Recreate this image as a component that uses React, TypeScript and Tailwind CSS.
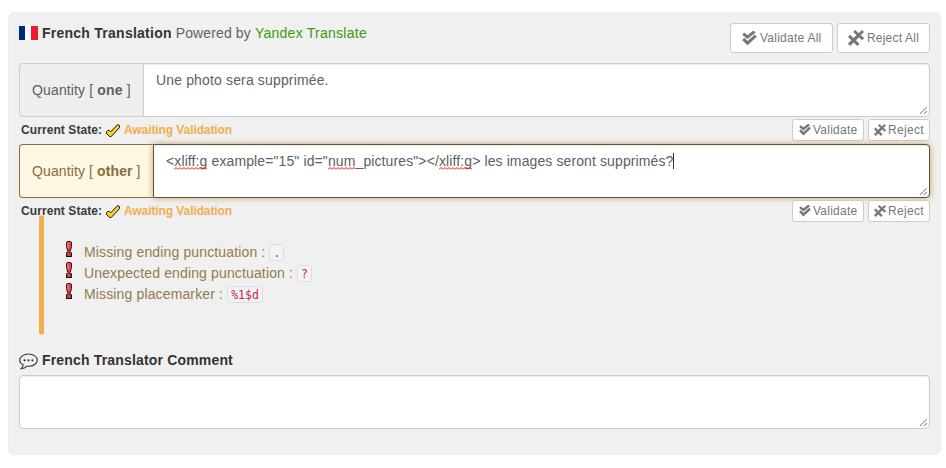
import type { ReactNode } from "react";

function DoubleCheck({ size }: { size: number }) {
  return (
    <svg width={size} height={size} viewBox="0 0 15 15" fill="none" stroke="#777" className="shrink-0">
      <path d="M1.3 2.6 5.4 6.1 12.6 .6" strokeWidth="3" />
      <path d="M1.2 7.8 5.5 12.1 13.8 4.6" strokeWidth="3.1" />
    </svg>
  );
}

function DoubleCross({ size }: { size: number }) {
  return (
    <svg width={size} height={size} viewBox="0 0 16 16" fill="none" stroke="#777" className="shrink-0">
      <path d="M1 5.8 10.4 14.8M10 5.8 1 14.8" strokeWidth="3.1" />
      <path d="M6.2 1 15.2 9.2M15 1 8.2 7.6" strokeWidth="2.8" />
    </svg>
  );
}

function PixelCheck() {
  return (
    <svg width="14" height="14" viewBox="0 0 14 14" className="absolute left-0 top-0">
      <path d="M11.4 .8H12.8L13.5 1.6V3.6L5.2 12.5H3.6L.6 9.5V7.6L1.8 6.4H3.3L4.7 7.8Z" fill="#ffd028" stroke="#111" strokeWidth="1" />
    </svg>
  );
}

function Exclamation() {
  return (
    <svg width="6" height="16" viewBox="0 0 6 16" className="relative -top-1 shrink-0">
      <path d="M.5 1.2 1.2.5H4.8L5.5 1.2V5.5L4.3 10.3H1.7L.5 5.5Z" fill="#e2444a" stroke="#2a0508" strokeWidth=".9" />
      <path d="M2 1.5V7" stroke="#f39a9a" strokeWidth=".9" />
      <rect x=".6" y="11.8" width="4.8" height="3.7" fill="#dc3c40" stroke="#1c0305" strokeWidth="1" />
      <path d="M2 12.6h1.2" stroke="#f5a0a0" strokeWidth=".9" />
    </svg>
  );
}

function Grip() {
  return (
    <svg width="9" height="9" viewBox="0 0 9 9" className="absolute right-px bottom-px">
      <path d="M.8 8 7.8 1M4.8 8 7.8 5" stroke="#444" strokeWidth="1" strokeDasharray="1.1 .3" />
    </svg>
  );
}

function SmallButton({ icon, children, className }: { icon: ReactNode; children: ReactNode; className: string }) {
  return (
    <button className={`flex h-[22px] items-center rounded-[3px] border border-[#ccc] bg-white text-xs text-[#777] ${className}`}>
      {icon}
      <span className="whitespace-nowrap">{children}</span>
    </button>
  );
}

function StateRow() {
  return (
    <div className="flex h-[22px] justify-between">
      <div className="flex h-[22px] items-center pl-0.5 text-xs font-bold text-[#3a3a3a]">
        <span className="w-[85px] whitespace-nowrap tracking-[0.08px]">Current State:</span>
        <span className="relative top-px mr-1 h-3.5 w-3.5"><PixelCheck /></span>
        <span className="tracking-[-0.09px] text-[#f0ad4e]">Awaiting Validation</span>
      </div>
      <div className="flex gap-1">
        <SmallButton className="w-[72px] gap-0.5 pl-1.5 tracking-[0.25px]" icon={<DoubleCheck size={12} />}>Validate</SmallButton>
        <SmallButton className="w-[62px] gap-0.5 pl-[5px] tracking-[0.3px]" icon={<DoubleCross size={12} />}>Reject</SmallButton>
      </div>
    </div>
  );
}

function Misspelled({ children }: { children: ReactNode }) {
  return (
    <span className="relative">
      {children}
      <svg className="absolute bottom-[-1px] left-0 h-[3px] w-full" preserveAspectRatio="none">
        <defs>
          <pattern id="squiggle" width="4" height="3" patternUnits="userSpaceOnUse">
            <path d="M0 2.5 2 .5 4 2.5" fill="none" stroke="#f00" strokeWidth="1" />
          </pattern>
        </defs>
        <rect width="100%" height="3" fill="url(#squiggle)" />
      </svg>
    </span>
  );
}

function Warning({ text, code }: { text: string; code: string }) {
  return (
    <li className="flex h-[21px] items-center">
      <Exclamation />
      <span className="relative -top-px ml-3 whitespace-pre tracking-[0.14px] text-[#957a4a]">{text} : </span>
      <code className="flex h-[17px] items-center rounded-[3px] border border-[#ddd] bg-[#f3f3f3] px-[3px] font-['DejaVu_Sans_Mono',monospace] text-[11.5px] text-[#c7254e]">{code}</code>
    </li>
  );
}

export default function App() {
  return (
    <div className="h-[468px] w-[946px] bg-white pt-3 pl-2 font-['Liberation_Sans',Arial,sans-serif] text-sm leading-5 text-[#606060]">
      <main className="h-[443px] w-[933px] rounded-md border border-[#eee] bg-[#f0f0f0] px-2.5 pt-2.5">
        <header className="flex h-10 justify-between">
          <div className="flex h-5 items-center whitespace-pre">
            <span className="mr-1 flex h-3.5 w-[19px]">
              <i className="w-1.5 bg-[#00267f]" /><i className="w-1.5 bg-white" /><i className="w-[7px] bg-[#f31830]" />
            </span>
            <b className="tracking-[0.25px] text-[#333]">French Translation</b>
            <span className="tracking-[0.12px]"> Powered by </span>
            <a className="tracking-[0.26px] text-[#3c9a0a]">Yandex Translate</a>
          </div>
          <div className="flex gap-1">
            <button className="flex h-[30px] w-[103px] items-center gap-[3px] rounded-[3px] border border-[#ccc] bg-white pl-[11px] text-xs tracking-[0.25px] text-[#777]"><DoubleCheck size={15} /><span className="whitespace-nowrap">Validate All</span></button>
            <button className="flex h-[30px] w-[93px] items-center gap-[3px] rounded-[3px] border border-[#ccc] bg-white pl-2.5 text-xs tracking-[0.2px] text-[#777]"><DoubleCross size={16} /><span className="whitespace-nowrap">Reject All</span></button>
          </div>
        </header>

        <div className="flex h-[54px] tracking-[0.15px]">
          <div className="flex w-[124px] items-center whitespace-pre rounded-l border border-r-0 border-[#ccc] bg-[#eee] pl-3 tracking-[0.14px]">Quantity [ <b>one</b> ]</div>
          <div className="relative flex-1 rounded-r border border-[#ccc] bg-white px-3 py-1.5 shadow-[inset_0_1px_1px_rgba(0,0,0,0.075)]">
            Une photo sera supprimée.
            <Grip />
          </div>
        </div>
        <div className="pt-0.5"><StateRow /></div>

        <div className="mt-[3px] flex h-[54px]">
          <div className="flex w-[134px] items-center whitespace-pre rounded-l border border-r-0 border-[#8a6d3b] bg-[#fcf8e3] pl-3 tracking-[0.11px] text-[#8a6d3b]">Quantity [ <b>other</b> ]</div>
          <div className="relative flex-1 rounded-r border border-[#66512c] bg-white px-3 py-1.5 tracking-[0.11px] shadow-[inset_0_1px_1px_rgba(0,0,0,0.075),0_0_6px_#c0a16b]">
            <span className="whitespace-nowrap">&lt;<Misspelled>xliff:g</Misspelled> example="15" id="<Misspelled>num</Misspelled>_pictures"&gt;&lt;/<Misspelled>xliff:g</Misspelled>&gt; les images seront supprimés?<i className="inline-block h-4 w-px bg-[#333] align-[-3px]" /></span>
            <Grip />
          </div>
        </div>
        <div className="relative z-10 pt-0.5"><StateRow /></div>

        <section className="-mt-[7px] ml-5 mr-5 h-[120px] rounded-[3px] border border-l-[5px] border-[#eee] border-l-[#f0ad4e] pt-[26px] pl-[22px]">
          <ul>
            <Warning text="Missing ending punctuation" code="." />
            <Warning text="Unexpected ending punctuation" code="?" />
            <Warning text="Missing placemarker" code="%1$d" />
          </ul>
        </section>

        <div className="mt-[15px] flex h-5 items-center gap-1">
          <svg width="19" height="17" viewBox="0 0 19 17" className="relative top-px" fill="none" stroke="#333" strokeWidth="1.1">
            <path d="M4.2 11.7C2 10.7.7 9.1.7 7.2.7 3.8 4.6 1 9.5 1s8.8 2.8 8.8 6.2-3.9 6.1-8.8 6.1l-1.6-.1C6.5 14.7 4.4 15.6 2 15.8c1.2-1.1 2-2.5 2.2-4.1Z" />
            <g fill="#333" stroke="none"><circle cx="5.6" cy="7.3" r="1.1" /><circle cx="9.5" cy="7.3" r="1.1" /><circle cx="13.4" cy="7.3" r="1.1" /></g>
          </svg>
          <b className="tracking-[0.17px] text-[#333]">French Translator Comment</b>
        </div>
        <div className="relative mt-[5px] h-[54px] rounded border border-[#ccc] bg-white shadow-[inset_0_1px_1px_rgba(0,0,0,0.075)]"><Grip /></div>
      </main>
    </div>
  );
}
